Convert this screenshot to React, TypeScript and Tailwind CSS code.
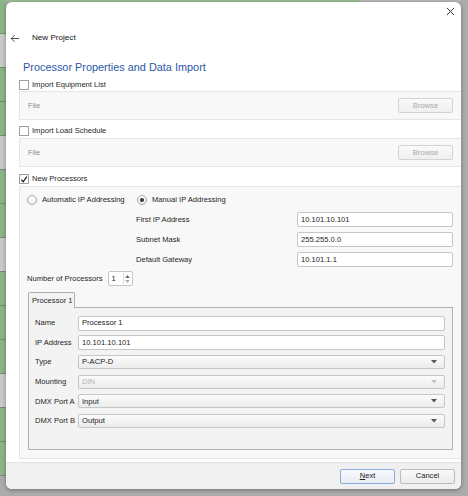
import React from "react";

function CheckBox({ checked, label }: { checked?: boolean; label: string }) {
  return (
    <div className="flex items-center gap-[3px]">
      <div className="w-[10px] h-[10px] border border-[#a0a0a0] bg-white flex items-center justify-center">
        {checked && (
          <svg viewBox="0 0 10 10" className="w-[9px] h-[9px]">
            <path d="M1.6 5.3 L3.9 7.9 L8.6 1.4" fill="none" stroke="#111" strokeWidth="1.4" />
          </svg>
        )}
      </div>
      <span>{label}</span>
    </div>
  );
}

function Radio({ checked, label }: { checked?: boolean; label: string }) {
  return (
    <div className="flex items-center gap-[5px]">
      <div className="w-[10px] h-[10px] rounded-full border border-[#a8a8a8] bg-gradient-to-b from-white to-[#ececec] flex items-center justify-center">
        {checked && <div className="w-[4px] h-[4px] rounded-full bg-[#333]" />}
      </div>
      <span>{label}</span>
    </div>
  );
}

function TextBox({ value, className = "" }: { value: string; className?: string }) {
  return (
    <div
      className={`h-[15px] border border-[#c6c6c6] rounded-[2px] bg-white flex items-center px-[3px] text-[#222] ${className}`}
    >
      {value}
    </div>
  );
}

function Combo({ value, disabled }: { value: string; disabled?: boolean }) {
  return (
    <div className="h-[14px] flex-1 border border-[#c6c6c6] rounded-[2px] bg-gradient-to-b from-[#fbfbfb] to-[#ececec] flex items-center justify-between pl-[3px] pr-[7px]">
      <span className={disabled ? "text-[#b4b4b4]" : "text-[#222]"}>{value}</span>
      <svg viewBox="0 0 6 4" className="w-[6px] h-[4px]">
        <path d="M0 0 L6 0 L3 3.5 Z" fill={disabled ? "#c4c4c4" : "#555"} />
      </svg>
    </div>
  );
}

function Button({ label, disabled, primary }: { label: React.ReactNode; disabled?: boolean; primary?: boolean }) {
  return (
    <div
      className={`w-[55px] h-[15px] rounded-[2px] border flex items-center justify-center bg-gradient-to-b ${
        primary
          ? "border-[#86aede] from-[#f7f9fc] to-[#e9edf3] text-[#222]"
          : disabled
          ? "border-[#d3d3d3] from-[#fafafa] to-[#efefef] text-[#a8a8a8]"
          : "border-[#bcbcbc] from-[#fafafa] to-[#ebebeb] text-[#222]"
      }`}
    >
      {label}
    </div>
  );
}

function FileGroup() {
  return (
    <div className="h-[29px] ml-[13px] bg-[#f8f8f8] border-t border-b border-l border-[#e6e6e6] flex items-center justify-between pl-[8px] pr-[8px]">
      <span className="text-[#8c8c8c]">File</span>
      <Button label="Browse" disabled />
    </div>
  );
}

function LeftStrip() {
  const cells = ["#8db488", "#c9c9c9", "#8db488", "#8db488", "#c9c9c9", "#8db488", "#8db488", "#c9c9c9", "#8db488", "#8db488", "#8db488", "#c9c9c9", "#8db488", "#8db488"];
  return (
    <div className="w-[6px] flex flex-col">
      {cells.map((c, i) => (
        <div key={i} className="h-[34px] border-b border-[#6f8f6c]" style={{ backgroundColor: c }} />
      ))}
    </div>
  );
}

export default function App() {
  const ipRows = [
    ["First IP Address", "10.101.10.101"],
    ["Subnet Mask", "255.255.0.0"],
    ["Default Gateway", "10.101.1.1"],
  ];

  return (
    <div className="w-[468px] h-[496px] bg-[#ababab] overflow-hidden flex font-['Liberation_Sans',Arial,sans-serif] text-[7.6px] text-[#1e1e1e] leading-none">
      <LeftStrip />
      <div className="flex flex-col">
        <div className="h-[2px] w-[455px] flex">
          <div className="w-[354px] bg-[#9dbd96]" />
          <div className="flex-1 bg-[#b8b8b8]" />
        </div>
        {/* dialog */}
        <div className="w-[455px] h-[487px] bg-white rounded-[6px] shadow-[0_1px_4px_rgba(0,0,0,0.35)] flex flex-col overflow-hidden">
          <div className="h-[22px] flex justify-end pr-[6px] pt-[5px]">
            <svg viewBox="0 0 10 10" className="w-[9px] h-[9px]">
              <path d="M1 1 L9 9 M9 1 L1 9" stroke="#333" strokeWidth="1.1" />
            </svg>
          </div>
          <div className="h-[28px] flex items-center">
            <svg viewBox="0 0 12 10" className="w-[10px] h-[9px] ml-[4px]">
              <path d="M11 5 H1.5 M5.5 1 L1.5 5 L5.5 9" fill="none" stroke="#444" strokeWidth="1.1" />
            </svg>
            <span className="ml-[12px] text-[8.1px] text-[#111]">New Project</span>
          </div>
          <div className="h-[26px] pt-[10px] pl-[17px]">
            <span className="text-[10.9px] text-[#2c57a8]">Processor Properties and Data Import</span>
          </div>
          <div className="h-[13px] flex items-center pl-[13px]">
            <CheckBox label="Import Equipment List" />
          </div>
          <FileGroup />
          <div className="h-[18px] flex items-center pt-[4px] pl-[13px]">
            <CheckBox label="Import Load Schedule" />
          </div>
          <FileGroup />
          <div className="h-[19px] flex items-center pt-[5px] pl-[13px]">
            <CheckBox checked label="New Processors" />
          </div>
          {/* processors group */}
          <div className="h-[273px] ml-[13px] bg-[#f8f8f8] border-t border-b border-l border-[#e6e6e6] flex flex-col pl-[7px] pr-[8px] pt-[6px]">
            <div className="h-[14px] flex items-center">
              <div className="w-[110px]">
                <Radio label="Automatic IP Addressing" />
              </div>
              <Radio checked label="Manual IP Addressing" />
            </div>
            <div className="mt-[5px] flex flex-col gap-[5px]">
              {ipRows.map(([l, v]) => (
                <div key={l} className="h-[15px] flex items-center">
                  <span className="ml-[109px] flex-1">{l}</span>
                  <TextBox value={v} className="w-[156px]" />
                </div>
              ))}
            </div>
            <div className="mt-[4px] h-[15px] flex items-center">
              <span>Number of Processors</span>
              <div className="ml-[5px] w-[25px] h-[15px] border border-[#c6c6c6] rounded-[2px] bg-white flex items-center justify-between pl-[3px] pr-[1px]">
                <span>1</span>
                <div className="w-[8px] h-[11px] border-l border-[#dcdcdc] flex flex-col items-center justify-center gap-[2px]">
                  <svg viewBox="0 0 6 4" className="w-[5px] h-[3px]">
                    <path d="M0 4 L6 4 L3 0 Z" fill="#666" />
                  </svg>
                  <svg viewBox="0 0 6 4" className="w-[5px] h-[3px]">
                    <path d="M0 0 L6 0 L3 4 Z" fill="#aaa" />
                  </svg>
                </div>
              </div>
            </div>
            <div className="mt-[5px] ml-[1px] flex flex-col">
              <div className="flex">
                <div className="h-[16px] w-[47px] whitespace-nowrap border border-b-0 border-[#b0b0b0] bg-[#f3f3f3] rounded-t-[2px] flex items-center pl-[3px] relative top-[1px]">
                  Processor 1
                </div>
              </div>
              <div className="h-[143px] border border-[#b0b0b0] bg-[#f3f3f3] flex flex-col gap-[5.6px] pt-[8px] pl-[6px] pr-[7px]">
                {[
                  ["Name", <TextBox key="n" value="Processor 1" className="flex-1 h-[14px]" />],
                  ["IP Address", <TextBox key="i" value="10.101.10.101" className="flex-1 h-[14px]" />],
                  ["Type", <Combo key="t" value="P-ACP-D" />],
                  ["Mounting", <Combo key="m" value="DIN" disabled />],
                  ["DMX Port A", <Combo key="a" value="Input" />],
                  ["DMX Port B", <Combo key="b" value="Output" />],
                ].map(([l, field]) => (
                  <div key={l as string} className="h-[14px] flex items-center">
                    <span className="w-[43px] whitespace-nowrap">{l}</span>
                    {field}
                  </div>
                ))}
              </div>
            </div>
          </div>
          <div className="mt-[3px] flex-1 bg-[#f0f0f0] border-t border-[#e2e2e2] flex items-center justify-end gap-[5px] pr-[6px]">
            <Button
              primary
              label={
                <span>
                  <span className="underline">N</span>ext
                </span>
              }
            />
            <Button label="Cancel" />
          </div>
        </div>
      </div>
    </div>
  );
}
